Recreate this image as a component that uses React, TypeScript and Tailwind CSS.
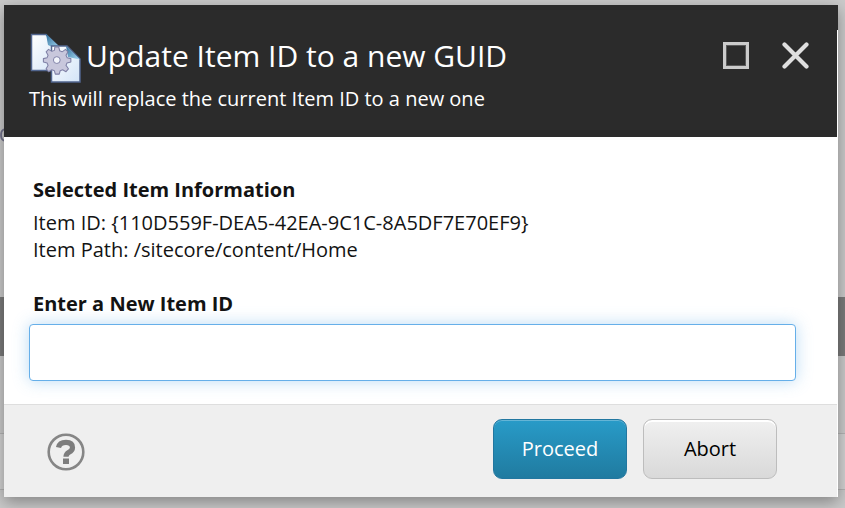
import { useState, ChangeEvent } from "react"

const item = {
    id: '{110D559F-DEA5-42EA-9C1C-8A5DF7E70EF9}',
    path: '/sitecore/content/Home'
}

function DocumentIcon() {
    return (
        <svg width="52" height="50" viewBox="0 0 52 50" className="shrink-0">
            <defs>
                <linearGradient id="paper" x1="0" y1="0" x2="1" y2="1">
                    <stop offset="0" stopColor="#ffffff" />
                    <stop offset="1" stopColor="#d3e4f8" />
                </linearGradient>
                <linearGradient id="fold" x1="0" y1="0" x2="1" y2="1">
                    <stop offset="0" stopColor="#2f6f9c" />
                    <stop offset="1" stopColor="#a9dcf5" />
                </linearGradient>
            </defs>
            <path d="M2.500 1.500H17L31 15V37.500H2.500Z" fill="url(#paper)" stroke="#52668f" strokeWidth="1.500" />
            <path d="M17 1L32 15H25L19 12Z" fill="url(#fold)" />
            <path d="M22.500 13H38L51 26V49H22.500Z" fill="url(#paper)" stroke="#52668f" strokeWidth="1.500" />
            <path d="M37 13L51 26.500L39 24Z" fill="url(#fold)" />
            <g stroke="#7f80a6" strokeLinejoin="round" transform="translate(1.600 .4) scale(.97)">
                <path
                    d="M25 14h4l1 4 2.500 1 3.500-2.500 2.500 2.500-2 3.500 1.200 2.500 3.800 1v3.500l-4 1-1 2.500 2.500 3.500-2.500 3-3.500-2-2.500 1-1 3.500h-4l-1-3.500-2.500-1-3.500 2-2.500-3 2-3.500-1-2.500-3.800-1v-3.500l3.800-1 1-2.500-2-3.500 2.500-2.500 3.500 2 2.500-1Z"
                    fill="#c8c7dc"
                    strokeWidth="1.100"
                />
                <circle cx="27" cy="27.500" r="3.500" fill="#f3f5fc" strokeWidth="1" />
            </g>
        </svg>
    )
}

export default function App() {

    const [newId, setNewId] = useState('')

    function handleChange(e: ChangeEvent<HTMLInputElement>) {
        setNewId(e.target.value)
    }

    return (
        <div className="relative h-[508px] w-[845px] overflow-hidden bg-[#cacaca] font-['Open_Sans','Noto_Sans',sans-serif] text-[#131313]">
            {/* Page behind the dialog */}
            <div className="flex h-full flex-col">
                <div className="flex h-[297px] items-end">
                    <svg width="12" height="14" viewBox="0 0 12 14" className="mb-[155px]" fill="none">
                        <path d="M10 2Q1 -1 1 7Q1 15 10 12" stroke="#73738c" strokeWidth="1.800" />
                    </svg>
                </div>
                <div className="h-[59px] bg-[#7b7b7b]" />
                <div className="h-[78px] border-b border-[#b4b4b4]" />
                <div className="h-14 border-b border-[#b4b4b4] bg-[#d2d2d2]" />
            </div>

            <div className="absolute left-1 top-[5px] flex h-[492px] w-[834px] flex-col bg-white shadow-[0_5px_15px_rgba(0,0,0,0.35)]">
                <div className="h-[25px] shrink-0 bg-[#2b2b2b]" />
                <header className="mr-px flex h-[107px] shrink-0 justify-between bg-[#2b2b2b] text-white">
                    <div className="pl-[25px] pt-[3px]">
                        <h1 className="flex h-[50px] items-center text-[30px] leading-[50px]">
                            <DocumentIcon />
                            <span className="mb-[5px] ml-[5px] whitespace-nowrap">Update Item ID to a new GUID</span>
                        </h1>
                        <p className="mt-0.5 text-[20px] leading-7">This will replace the current Item ID to a new one</p>
                    </div>
                    <div className="flex h-[27px] gap-[33px] pr-[28px] pt-3">
                        <button aria-label="Maximize" className="h-[27px] w-[26px] shrink-0 border-[3px] border-[#cbcbcb] shadow-[inset_0_0_0_1px_#5a5a5a]" />
                        <button aria-label="Close" className="h-[27px] w-[27px] shrink-0">
                            <svg width="27" height="27" viewBox="0 0 27 27">
                                <path d="M2.500 2.500L24.500 24.500M24.500 2.500L2.500 24.500" stroke="#dfdfdf" strokeWidth="4.200" strokeLinecap="round" />
                            </svg>
                        </button>
                    </div>
                </header>

                <main className="flex-1 pl-[25px] pr-[42px] pt-[39px] text-[20px]">
                    <section className="pl-1">
                        <h2 className="h-[33px] font-bold leading-[27px]">Selected Item Information</h2>
                        <p className="leading-[27px]">Item ID: {item.id}</p>
                        <p className="leading-[27px]">Item Path: {item.path}</p>
                    </section>
                    <label htmlFor="newId" className="mt-[27px] block h-[34px] pl-1 font-bold leading-[27px]">Enter a New Item ID</label>
                    <input
                        id="newId"
                        type="text"
                        className="block h-[57px] w-full rounded-[4px] border border-[#66afe9] bg-white px-3 shadow-[0_0_16px_rgba(102,175,233,0.45)] outline-none"
                        value={newId}
                        onChange={handleChange}
                    />
                </main>

                <footer className="mr-px flex h-[93px] shrink-0 items-start border-t border-[#dedede] bg-[#efefef] pl-[43px] pr-[60px] pt-[14px] text-[20px]">
                    <svg width="38" height="38" viewBox="0 0 38 38" fill="none" className="mt-[14px]">
                        <circle cx="19" cy="19" r="17.300" stroke="#868686" strokeWidth="2.600" />
                        <path d="M11.500 14.500Q12.500 9.300 19 9.300Q25.500 9.300 25.500 14.500Q25.500 17.500 22 19.300Q19 21 19 23.800" stroke="#7d7d7d" strokeWidth="5.200" />
                        <path d="M16 25.500H22V31H16Z" fill="#7d7d7d" />
                    </svg>
                    <div className="ml-auto flex gap-4">
                        <button className="h-[60px] w-[134px] rounded-[9px] border border-[#2277a0] bg-linear-to-b from-[#289bc8] to-[#207ba0] text-white shadow-[inset_0_1px_0_#64b5d6]">Proceed</button>
                        <button className="h-[60px] w-[134px] rounded-[9px] border border-[#bdbdbd] bg-linear-to-b from-[#f0f0f0] to-[#d9d9d9] text-black shadow-[inset_0_2px_0_#ffffff]">Abort</button>
                    </div>
                </footer>
            </div>
        </div>
    )
}
